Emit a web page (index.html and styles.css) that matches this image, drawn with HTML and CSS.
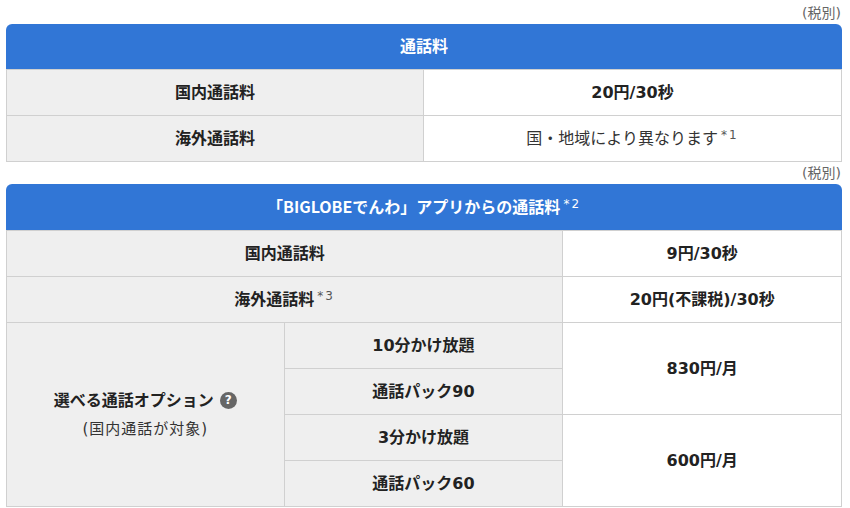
FILE: index.html
```html
<!DOCTYPE html>
<html lang="ja">
<head>
<meta charset="utf-8">
<title>通話料</title>
<link rel="stylesheet" href="styles.css">
</head>
<body>
<div class="page">
  <p class="tax">(税別)</p>
  <table class="rates half">
    <thead>
      <tr><th class="head" colspan="2">通話料</th></tr>
    </thead>
    <tbody>
      <tr>
        <td class="label edge">国内通話料</td>
        <td class="value">20円/30秒</td>
      </tr>
      <tr>
        <td class="label edge">海外通話料</td>
        <td class="value plain">国・地域により異なります<sup class="note">*1</sup></td>
      </tr>
    </tbody>
  </table>

  <p class="tax">(税別)</p>
  <table class="rates thirds">
    <colgroup><col><col><col></colgroup>
    <thead>
      <tr><th class="head" colspan="3">「<span class="brand">BIGLOBE</span>でんわ」アプリからの通話料<sup class="note">*2</sup></th></tr>
    </thead>
    <tbody>
      <tr>
        <td class="label edge" colspan="2">国内通話料</td>
        <td class="value">9円/30秒</td>
      </tr>
      <tr>
        <td class="label edge" colspan="2">海外通話料<sup class="note">*3</sup></td>
        <td class="value">20円(不課税)/30秒</td>
      </tr>
      <tr>
        <td class="label edge option" rowspan="4">
          <div class="option-title">選べる通話オプション<span class="help">?</span></div>
          <div class="option-sub">(国内通話が対象)</div>
        </td>
        <td class="label">10分かけ放題</td>
        <td class="value" rowspan="2">830円/月</td>
      </tr>
      <tr>
        <td class="label">通話パック90</td>
      </tr>
      <tr>
        <td class="label">3分かけ放題</td>
        <td class="value" rowspan="2">600円/月</td>
      </tr>
      <tr>
        <td class="label">通話パック60</td>
      </tr>
    </tbody>
  </table>
</div>
</body>
</html>
```

FILE: styles.css
```css
html, body {
  margin: 0;
  padding: 0;
  background: #ffffff;
}

body {
  font-family: "DejaVu Sans", "Noto Sans CJK JP", sans-serif;
  color: #222222;
}

.page {
  margin: 0 8px 0 6px;
  padding-top: 2px;
}

.tax {
  margin: 0;
  text-align: right;
  font-size: 14px;
  line-height: 22px;
  color: #666666;
  padding-right: 1px;
}

.rates {
  width: 100%;
  border-collapse: separate;
  border-spacing: 0;
  table-layout: fixed;
}

.rates th,
.rates td {
  padding: 10px 0;
  line-height: 25px;
  font-size: 16px;
  text-align: center;
  vertical-align: middle;
}

.head {
  background: #3176d6;
  color: #ffffff;
  font-weight: bold;
  border-radius: 6px 6px 0 0;
}

.brand {
  font-family: "Noto Sans CJK JP", sans-serif;
}

.rates td {
  border-right: 1px solid #d0d0d0;
  border-bottom: 1px solid #d0d0d0;
  font-weight: bold;
}

.rates tbody tr:first-child td {
  border-top: 1px solid #d0d0d0;
}

.rates td.edge {
  border-left: 1px solid #d0d0d0;
}

.label {
  background: #efefef;
}

.value {
  background: #ffffff;
}

.value.plain {
  font-weight: normal;
  color: #333333;
}

.note {
  font-size: 12px;
  font-weight: normal;
  vertical-align: 5px;
  line-height: 0;
  margin-left: 3px;
  letter-spacing: 2px;
}

.rates td .note {
  color: #555555;
}

.option {
  padding: 0;
}

.option-title {
  line-height: 28px;
}

.help {
  display: inline-block;
  width: 17px;
  height: 17px;
  margin-left: 6px;
  border-radius: 50%;
  background: #666666;
  color: #ffffff;
  font-size: 12px;
  line-height: 17px;
  font-weight: bold;
  vertical-align: 2px;
  text-align: center;
}

.option-sub {
  font-weight: normal;
  font-size: 15px;
  letter-spacing: 1px;
  line-height: 28px;
  color: #333333;
}
```
